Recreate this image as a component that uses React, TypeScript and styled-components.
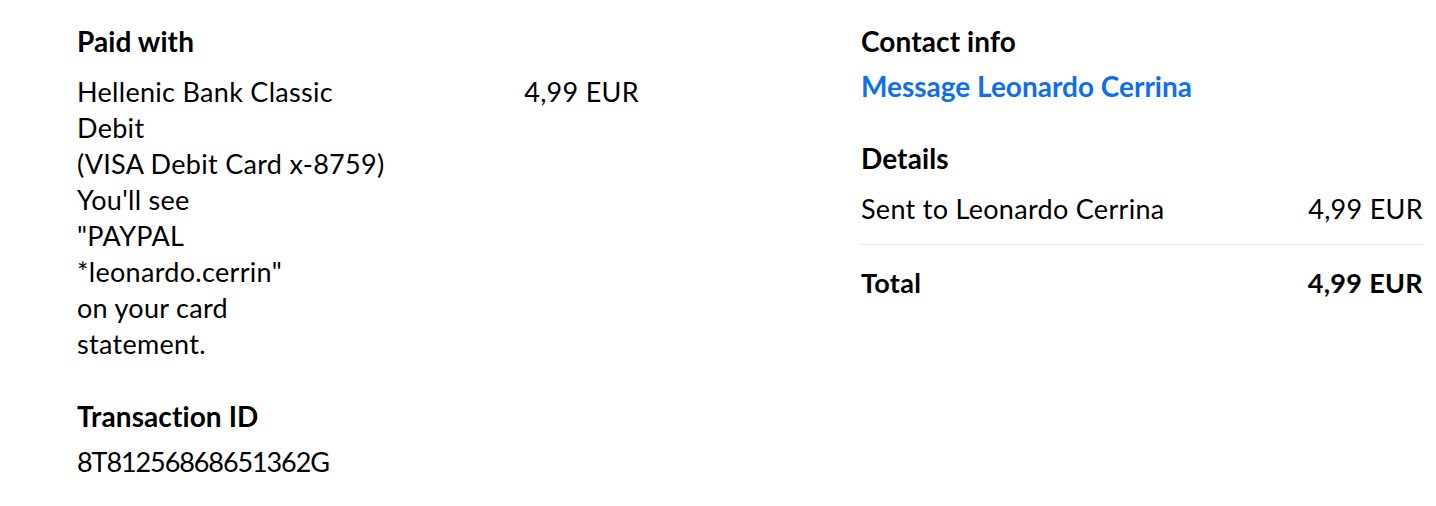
import styled, { createGlobalStyle } from 'styled-components'

const GlobalStyle = createGlobalStyle`
	html, body {
		margin: 0;
		padding: 0;
		background: #ffffff;
	}
	body {
		font-family: Lato, 'Noto Sans', sans-serif;
		color: #000000;
		-webkit-font-smoothing: antialiased;
	}
`

const Main = styled.main`
	display: grid;
	grid-template-columns: 562px 562px;
	column-gap: 222px;
	padding: 25px 13px 0 77px;
`

const Column = styled.section`
	display: flex;
	flex-direction: column;
`

const Heading = styled.h2<{ $gap?: number }>`
	margin: 0 0 ${p => p.$gap ?? 17}px;
	font-size: 28px;
	line-height: 32px;
	font-weight: 700;
	letter-spacing: 0.1px;
`

const Block = styled.div<{ $after?: number }>`
	margin-bottom: ${p => p.$after ?? 0}px;
`

const PaymentRow = styled.div`
	display: grid;
	grid-template-columns: 340px 1fr;
	align-items: start;
`

const Text = styled.p`
	margin: 0;
	font-size: 27px;
	line-height: 36px;
	letter-spacing: 0.3px;
`

const Amount = styled(Text)`
	text-align: right;
`

const Code = styled(Text)`
	letter-spacing: -1.1px;
`

const Link = styled.a`
	display: block;
	font-size: 28px;
	line-height: 32px;
	font-weight: 700;
	color: #0f6fe9;
	text-decoration: none;
	cursor: pointer;
`

const LineItem = styled.div<{ $strong?: boolean }>`
	display: flex;
	justify-content: space-between;
	font-size: 27px;
	line-height: 36px;
	letter-spacing: 0.3px;
	font-weight: ${p => (p.$strong ? 700 : 400)};
`

const Divider = styled.hr`
	border: 0;
	border-top: 1px solid #e6e6e6;
	margin: 17px 0 20px;
`

export default function App() {
	return (
		<>
			<GlobalStyle />
			<Main>
				<Column>
					<Block $after={38}>
						<Heading>Paid with</Heading>
						<PaymentRow>
							<Text>
								Hellenic Bank Classic
								<br />
								Debit
								<br />
								(VISA Debit Card x-8759)
								<br />
								You'll see
								<br />
								"PAYPAL
								<br />
								*leonardo.cerrin"
								<br />
								on your card
								<br />
								statement.
							</Text>
							<Amount>4,99 EUR</Amount>
						</PaymentRow>
					</Block>
					<Block>
						<Heading $gap={12}>Transaction ID</Heading>
						<Code>8T81256868651362G</Code>
					</Block>
				</Column>
				<Column>
					<Block $after={40}>
						<Heading $gap={13}>Contact info</Heading>
						<Link>Message Leonardo Cerrina</Link>
					</Block>
					<Block>
						<Heading>Details</Heading>
						<LineItem>
							<span>Sent to Leonardo Cerrina</span>
							<span>4,99 EUR</span>
						</LineItem>
						<Divider />
						<LineItem $strong>
							<span>Total</span>
							<span>4,99 EUR</span>
						</LineItem>
					</Block>
				</Column>
			</Main>
		</>
	)
}
